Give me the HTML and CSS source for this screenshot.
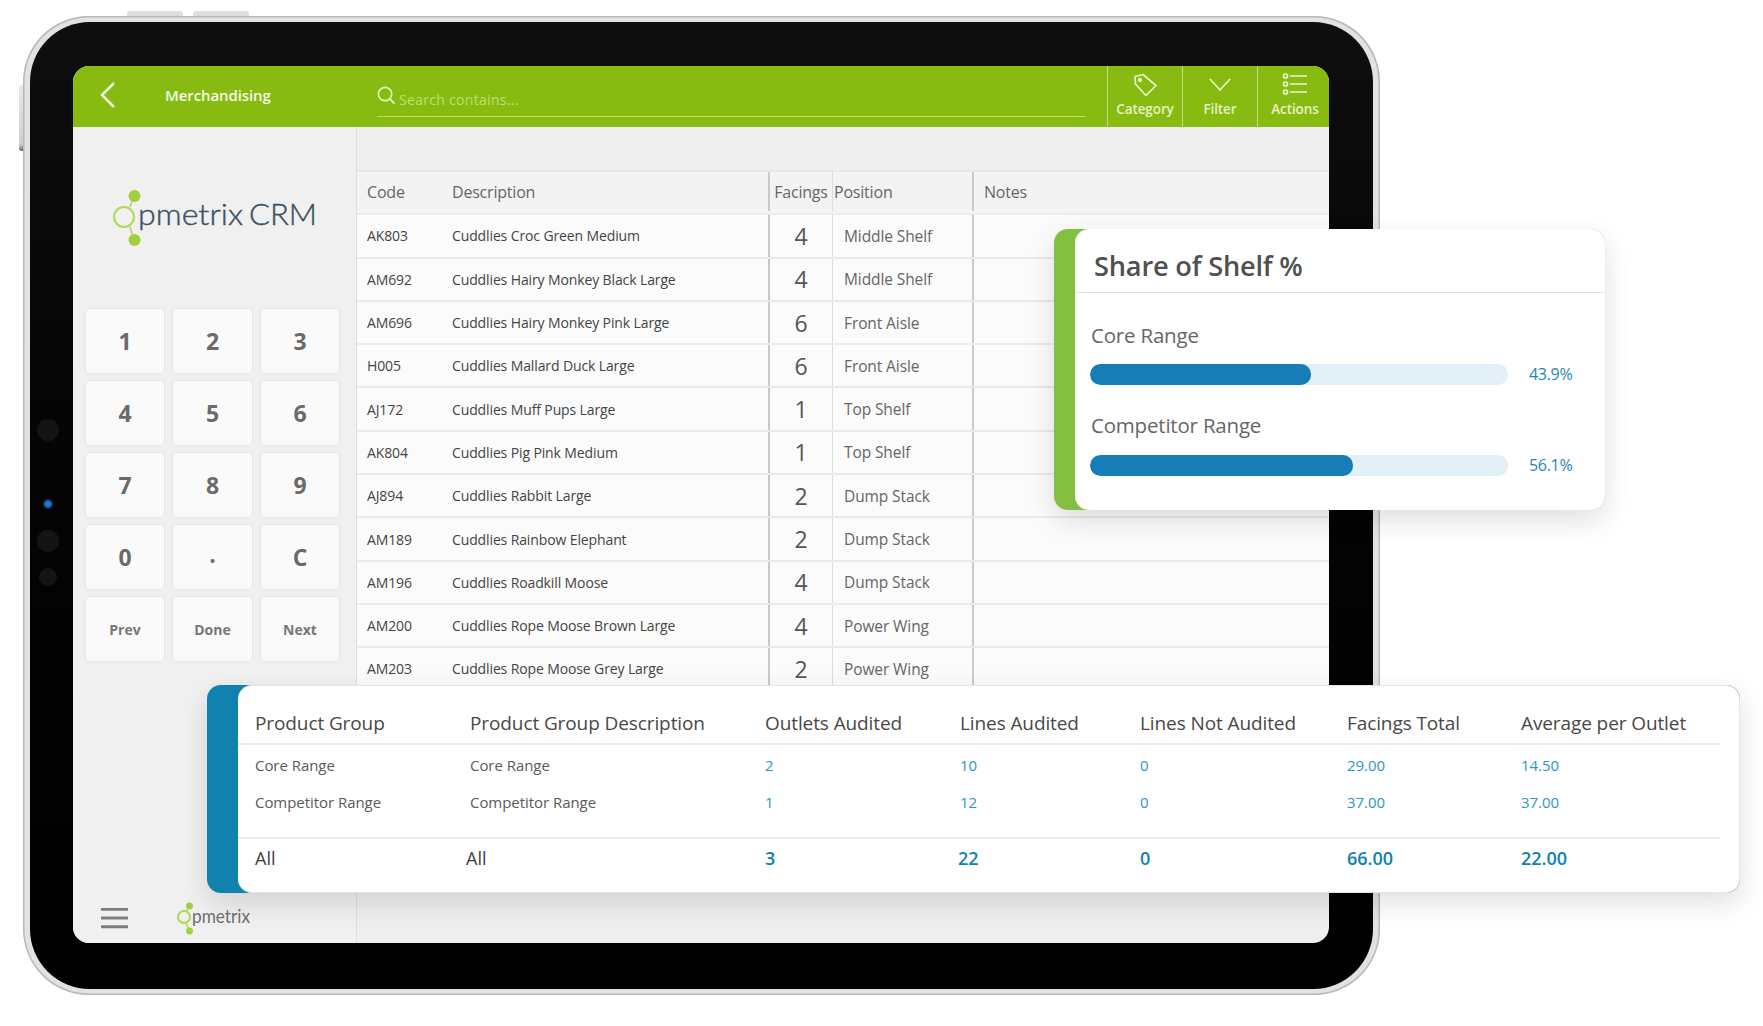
FILE: index.html
```html
<!DOCTYPE html>
<html lang="en">
<head>
<meta charset="utf-8">
<title>Merchandising</title>
<link rel="stylesheet" href="styles.css">
</head>
<body>
<div class="stage">
  <span class="hw-top hw-top-a"></span>
  <span class="hw-top hw-top-b"></span>
  <span class="hw-side"></span>
  <div class="tablet">
    <div class="bezel">
      <span class="cam cam-a"></span>
      <span class="cam cam-b"></span>
      <span class="cam cam-c"></span>
      <span class="cam cam-d"></span>
      <div class="screen">
        <header class="topbar">
          <svg class="back" viewBox="0 0 16 28"><path d="M14 2 2 14l12 12"/></svg>
          <div class="title">Merchandising</div>
          <div class="search">
            <svg class="search-icon" viewBox="0 0 20 20"><circle cx="8.500" cy="8.500" r="7"/><path d="m13.500 13.500 5 5"/></svg>
            <span class="search-text">Search contains...</span>
          </div>
          <div class="tool">
            <svg class="tool-icon" viewBox="0 0 26 24"><path d="M3 3.500 11 1.500 24 12.500 14 22.500 3.500 11Z"/><circle cx="8" cy="7" r="1.300"/></svg>
            <span>Category</span>
          </div>
          <div class="tool">
            <svg class="tool-icon" viewBox="0 0 26 24"><path d="m3 6 10 11L23 6"/></svg>
            <span>Filter</span>
          </div>
          <div class="tool">
            <svg class="tool-icon" viewBox="0 0 26 24"><circle cx="3.500" cy="3" r="2"/><circle cx="3.500" cy="11" r="2"/><circle cx="3.500" cy="19" r="2"/><path d="M8 3h17M8 11h17M8 19h17"/></svg>
            <span>Actions</span>
          </div>
        </header>
        <div class="content">
          <aside class="sidebar">
            <div class="logo-wrap">
              <svg class="logo" viewBox="0 0 206 62">
                <path class="logo-link" d="M21 9 17 20M17 40l4 13"/>
                <circle class="logo-ring" cx="11" cy="30" r="10"/>
                <circle class="logo-dot" cx="21.500" cy="9" r="6"/>
                <circle class="logo-dot" cx="21.500" cy="53" r="6"/>
                <text class="logo-text" x="25" y="38" textLength="105" lengthAdjust="spacingAndGlyphs">pmetrix</text>
                <text class="logo-text" x="136" y="38" textLength="68" lengthAdjust="spacingAndGlyphs">CRM</text>
              </svg>
            </div>
            <div class="keypad">
              <div class="key">1</div><div class="key">2</div><div class="key">3</div>
              <div class="key">4</div><div class="key">5</div><div class="key">6</div>
              <div class="key">7</div><div class="key">8</div><div class="key">9</div>
              <div class="key">0</div><div class="key key-dot">.</div><div class="key">C</div>
              <div class="key key-sm">Prev</div><div class="key key-sm">Done</div><div class="key key-sm">Next</div>
            </div>
            <div class="side-foot">
              <svg class="burger" viewBox="0 0 28 22"><path d="M0 2h28M0 11h28M0 20h28"/></svg>
              <svg class="logo-small" viewBox="0 0 92 36">
                <path class="logo-link" d="M12 6 9 12M9 23l3 7"/>
                <circle class="logo-ring" cx="7" cy="17" r="6"/>
                <circle class="logo-dot" cx="12.500" cy="6" r="3.400"/>
                <circle class="logo-dot" cx="12.500" cy="31" r="3.400"/>
                <text class="logo-small-text" x="15" y="23" textLength="58" lengthAdjust="spacingAndGlyphs">pmetrix</text>
              </svg>
            </div>
          </aside>
          <main class="main">
            <div class="row row-head"><div class="c-code">Code</div><div class="c-desc">Description</div><div class="c-fac">Facings</div><div class="c-pos">Position</div><div class="c-notes">Notes</div></div>
            <div class="row"><div class="c-code">AK803</div><div class="c-desc">Cuddlies Croc Green Medium</div><div class="c-fac">4</div><div class="c-pos">Middle Shelf</div><div class="c-notes"></div></div>
            <div class="row"><div class="c-code">AM692</div><div class="c-desc">Cuddlies Hairy Monkey Black Large</div><div class="c-fac">4</div><div class="c-pos">Middle Shelf</div><div class="c-notes"></div></div>
            <div class="row"><div class="c-code">AM696</div><div class="c-desc">Cuddlies Hairy Monkey Pink Large</div><div class="c-fac">6</div><div class="c-pos">Front Aisle</div><div class="c-notes"></div></div>
            <div class="row"><div class="c-code">H005</div><div class="c-desc">Cuddlies Mallard Duck Large</div><div class="c-fac">6</div><div class="c-pos">Front Aisle</div><div class="c-notes"></div></div>
            <div class="row"><div class="c-code">AJ172</div><div class="c-desc">Cuddlies Muff Pups Large</div><div class="c-fac">1</div><div class="c-pos">Top Shelf</div><div class="c-notes"></div></div>
            <div class="row"><div class="c-code">AK804</div><div class="c-desc">Cuddlies Pig Pink Medium</div><div class="c-fac">1</div><div class="c-pos">Top Shelf</div><div class="c-notes"></div></div>
            <div class="row"><div class="c-code">AJ894</div><div class="c-desc">Cuddlies Rabbit Large</div><div class="c-fac">2</div><div class="c-pos">Dump Stack</div><div class="c-notes"></div></div>
            <div class="row"><div class="c-code">AM189</div><div class="c-desc">Cuddlies Rainbow Elephant</div><div class="c-fac">2</div><div class="c-pos">Dump Stack</div><div class="c-notes"></div></div>
            <div class="row"><div class="c-code">AM196</div><div class="c-desc">Cuddlies Roadkill Moose</div><div class="c-fac">4</div><div class="c-pos">Dump Stack</div><div class="c-notes"></div></div>
            <div class="row"><div class="c-code">AM200</div><div class="c-desc">Cuddlies Rope Moose Brown Large</div><div class="c-fac">4</div><div class="c-pos">Power Wing</div><div class="c-notes"></div></div>
            <div class="row"><div class="c-code">AM203</div><div class="c-desc">Cuddlies Rope Moose Grey Large</div><div class="c-fac">2</div><div class="c-pos">Power Wing</div><div class="c-notes"></div></div>
          </main>
        </div>
      </div>
    </div>
  </div>

  <section class="card share">
    <div class="card-inner">
      <h2 class="share-title">Share of Shelf %</h2>
      <div class="share-body">
        <div class="share-label">Core Range</div>
        <div class="share-line">
          <div class="track"><div class="fill" style="width:52.900%"></div></div>
          <span class="pct">43.9%</span>
        </div>
        <div class="share-label share-label-b">Competitor Range</div>
        <div class="share-line">
          <div class="track"><div class="fill" style="width:63%"></div></div>
          <span class="pct">56.1%</span>
        </div>
      </div>
    </div>
  </section>

  <section class="card audit">
    <div class="card-inner audit-inner">
      <div class="a-row a-head"><div>Product Group</div><div>Product Group Description</div><div>Outlets Audited</div><div>Lines Audited</div><div>Lines Not Audited</div><div>Facings Total</div><div>Average per Outlet</div></div>
      <div class="a-rows">
        <div class="a-row a-data"><div>Core Range</div><div>Core Range</div><div class="num">2</div><div class="num">10</div><div class="num">0</div><div class="num">29.00</div><div class="num">14.50</div></div>
        <div class="a-row a-data"><div>Competitor Range</div><div>Competitor Range</div><div class="num">1</div><div class="num">12</div><div class="num">0</div><div class="num">37.00</div><div class="num">37.00</div></div>
      </div>
      <div class="a-row a-foot"><div>All</div><div class="a-shift">All</div><div class="num">3</div><div class="num a-nudge">22</div><div class="num">0</div><div class="num">66.00</div><div class="num">22.00</div></div>
    </div>
  </section>
</div>
</body>
</html>
```

FILE: styles.css
```css
* { box-sizing: border-box; }
html, body { margin: 0; padding: 0; background: #fff; }
body { font-family: "Open Sans", "Liberation Sans", sans-serif; color: #555; }

.stage { position: relative; width: 1763px; height: 1026px; overflow: hidden; }

/* hardware */
.hw-top { position: absolute; top: 11px; width: 56px; height: 5px; background: #dedede; border-radius: 3px 3px 0 0; }
.hw-top-a { left: 127px; }
.hw-top-b { left: 193px; }
.hw-side { position: absolute; left: 19px; top: 85px; width: 5px; height: 66px; background: linear-gradient(#e8e8e8, #cfcfcf 90%, #666); border-radius: 3px 0 0 3px; }

.tablet {
  position: absolute; left: 23px; top: 16px; width: 1357px; height: 979px;
  padding: 6px 7px; border-radius: 66px;
  background: #e2e2e2;
  box-shadow: inset 0 0 0 1.500px #b9b9b9;
}
.bezel {
  position: relative; height: 100%;
  padding: 44px 44px 46px 43px; border-radius: 60px;
  background: linear-gradient(#0e0e0e, #050505 40%, #000);
}
.cam { position: absolute; border-radius: 50%; background: #141414; transform: translate(-50%, -50%); left: 18px; }
.cam-a { top: 408px; width: 22px; height: 22px; }
.cam-b { top: 482px; width: 12px; height: 12px; background: radial-gradient(circle, #2277cc 0 30%, #0a0d16 60%); }
.cam-c { top: 519px; width: 22px; height: 22px; }
.cam-d { top: 555px; width: 18px; height: 18px; }

.screen { display: flex; flex-direction: column; height: 100%; border-radius: 16px; overflow: hidden; background: #efefef; }

/* top bar */
.topbar { display: flex; align-items: stretch; height: 61px; flex: none; background: #88bb11; color: #fff; }
.back { width: 16px; height: 28px; margin: 15px 0 0 27px; fill: none; stroke: #f2f8e0; stroke-width: 2.500; flex: none; }
.title { width: 261px; padding: 18px 0 0 49px; flex: none; font-size: 15px; font-weight: 600; letter-spacing: -.1px; line-height: 22px; color: #f6fae8; }
.search { position: relative; display: flex; align-items: flex-end; width: 708px; height: 51px; margin-right: 22px; padding-left: 22px; border-bottom: 1px solid #bcdc6e; flex: none; }
.search-icon { position: absolute; left: 0; top: 20px; width: 19px; height: 19px; fill: none; stroke: #e4f2bd; stroke-width: 1.800; }
.search-text { padding-bottom: 7px; font-size: 14px; line-height: 18px; color: #bede72; letter-spacing: .3px; }
.tool { display: flex; flex-direction: column; align-items: center; width: 75px; padding-top: 7px; border-left: 1px solid #c3de7e; flex: none; font-size: 13.500px; font-weight: 600; letter-spacing: -.1px; color: #e4f2c2; }
.tool span { line-height: 18px; margin-top: 3px; white-space: nowrap; }
.tool-icon { width: 26px; height: 24px; fill: none; stroke: #e9f4c9; stroke-width: 1.700; stroke-linejoin: round; }

/* body */
.content { display: flex; flex: 1; min-height: 0; }
.sidebar { display: flex; flex-direction: column; width: 284px; flex: none; padding: 0 13px 0 12px; border-right: 1px solid #dedede; background: #f0f0f0; }
.logo-wrap { height: 181px; padding: 60px 0 0 28px; flex: none; }
.logo { display: block; width: 206px; height: 62px; }
.logo-link { fill: none; stroke: #b0d65a; stroke-width: 1.500; }
.logo-ring { fill: none; stroke: #b0d65a; stroke-width: 2; }
.logo-dot { fill: #a2cf3a; }
.logo-text { font-family: "Lato", sans-serif; font-size: 30px; font-weight: 300; fill: #3a5264; stroke: #3a5264; stroke-width: .4px; }
.keypad { display: grid; grid-template-columns: 80px 81px 80px; grid-auto-rows: 66px; gap: 6px 7px; }
.key { display: flex; align-items: center; justify-content: center; border: 1px solid #e7e7e7; border-radius: 5px; background: #fafafa; font-size: 23px; font-weight: 700; color: #6a6a6a; }
.key-sm { font-size: 14px; color: #777; }
.key-dot { padding-bottom: 7px; }
.side-foot { display: flex; align-items: center; margin-top: auto; height: 61px; padding: 11px 0 0 16px; }
.burger { width: 27px; height: 22px; fill: none; stroke: #7d7d7d; stroke-width: 3; flex: none; }
.logo-small { width: 92px; height: 36px; margin-left: 49px; flex: none; }
.logo-small-text { font-family: "Lato", sans-serif; font-size: 20px; fill: #6f6f6f; }

/* table */
.main { flex: 1; min-width: 0; padding-top: 43px; overflow: hidden; }
.row { display: grid; grid-template-columns: 95px 316px 64px 140px 1fr; height: 43.300px; border-bottom: 2px solid #ebebeb; background: #fbfbfb; font-size: 14px; letter-spacing: -.12px; color: #444; }
.row > div { display: flex; align-items: center; min-width: 0; white-space: nowrap; }
.row-head { height: 45.300px; padding-bottom: 2px; border-top: 2px solid #e8e8e8; background: #f3f3f3; font-size: 16px; letter-spacing: -.2px; color: #666; }
.c-code { padding-left: 10px; }
.c-fac { justify-content: center; border-left: 2px solid #c9c9c9; font-size: 23px; color: #555; }
.row-head .c-fac { font-size: 16px; color: #666; }
.c-pos { padding-left: 11px; border-left: 1px solid #dcdcdc; font-size: 15.500px; letter-spacing: -.1px; color: #666; }
.row-head .c-pos { padding-left: 1px; font-size: 16px; letter-spacing: -.2px; }
.c-notes { padding-left: 10px; border-left: 2px solid #c9c9c9; }

/* floating cards */
.card { position: absolute; border-radius: 14px; box-shadow: 0 10px 28px rgba(0, 0, 0, .13); }
.card-inner { height: 100%; background: #fff; border-radius: 14px; }
.share { left: 1054px; top: 229px; width: 551px; height: 281px; padding-left: 21px; background: #84bf41; }
.share-title { margin: 0; height: 64px; padding: 18px 0 0 19px; border-bottom: 1px solid #e2e2e2; font-size: 27.200px; font-weight: 600; line-height: 38px; letter-spacing: -.2px; color: #505050; }
.share-body { padding: 28px 0 0 15px; }
.share-label { padding-left: 1px; font-size: 20.500px; line-height: 28px; letter-spacing: -.2px; color: #666; }
.share-label-b { margin-top: 26px; }
.share-line { display: flex; align-items: center; gap: 21px; margin-top: 14px; }
.share-label-b + .share-line { margin-top: 15px; }
.track { width: 418px; height: 21px; border-radius: 10px; background: #e3eff7; overflow: hidden; }
.fill { height: 100%; border-radius: 10px; background: #177db7; }
.pct { font-size: 16px; letter-spacing: -.3px; color: #1f85bd; }

.audit { left: 207px; top: 685px; width: 1533px; height: 208px; padding-left: 31px; background: #1082ad; }
.audit-inner { padding: 0 19px 0 17px; border: 1px solid #e6e6e6; border-left: 0; }
.a-row { display: grid; grid-template-columns: 215px 295px 195px 180px 207px 174px 1fr; margin: 0 -19px 0 -17px; padding: 0 19px 0 17px; }
.a-row > div { white-space: nowrap; }
.a-head { height: 59px; align-items: end; padding-bottom: 7px; border-bottom: 2px solid #ececec; margin-right: 0; padding-right: 0; font-size: 19px; letter-spacing: -.1px; font-weight: 500; line-height: 26px; color: #484848; }
.a-rows { padding: 1px 0 17px; }
.a-data { height: 37px; align-items: center; font-size: 15px; letter-spacing: -.05px; color: #5a5a5a; }
.a-data .num { color: #2c97c0; }
.a-foot { height: 54px; padding-bottom: 14px; align-items: center; border-top: 2px solid #ececec; margin-right: 0; padding-right: 0; font-size: 18px; color: #3e3e3e; }
.a-foot .num { font-weight: 600; color: #0f82ad; }
.a-shift { margin-left: -4px; }
.a-nudge { margin-left: -2px; }
```
